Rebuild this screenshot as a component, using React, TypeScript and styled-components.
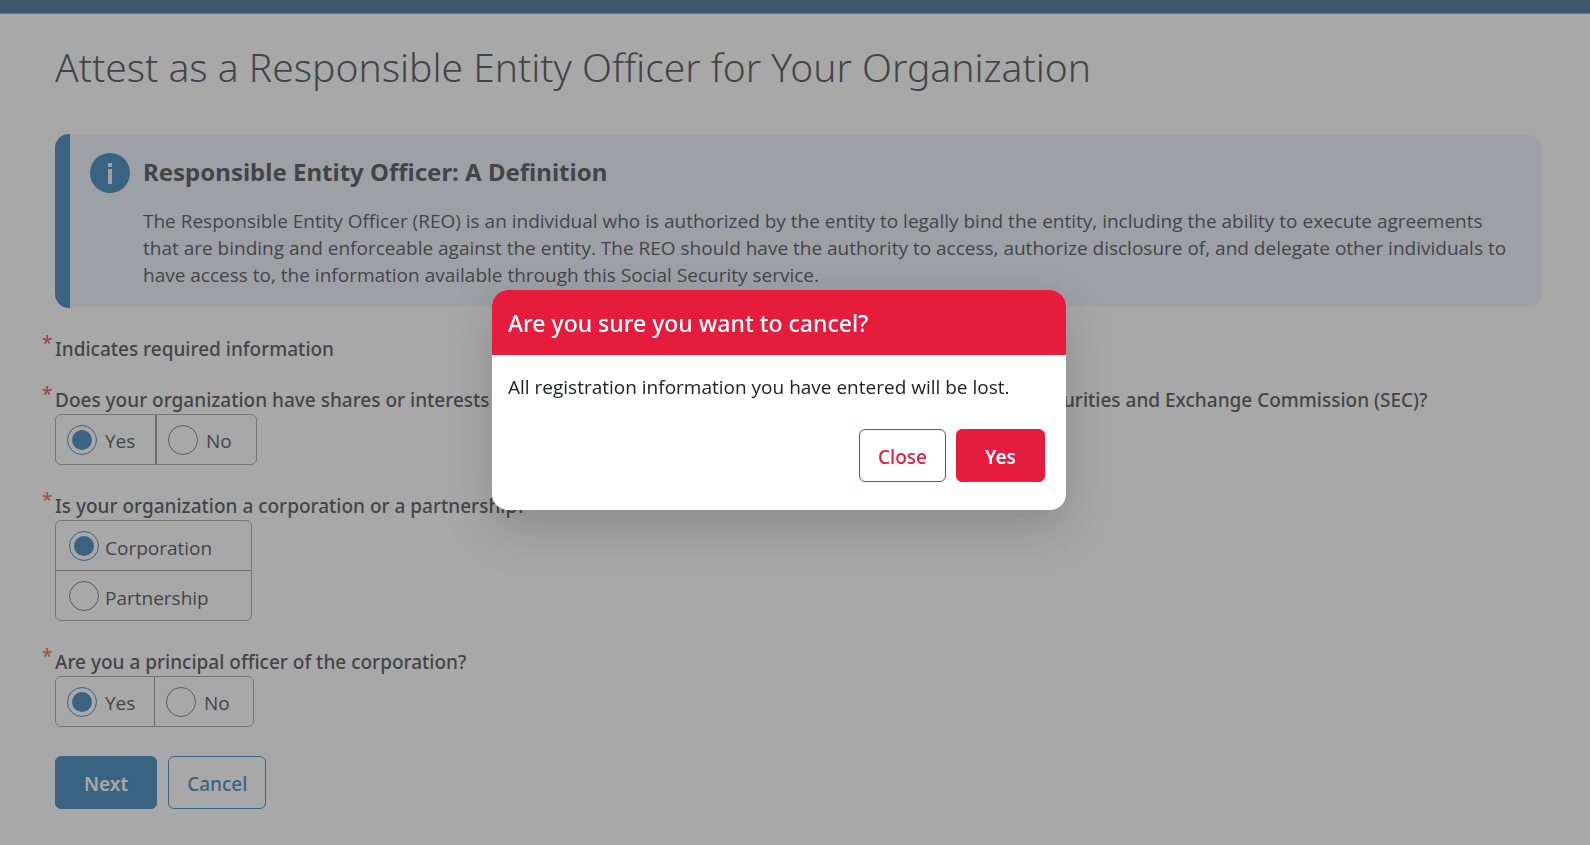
import React from "react";
import styled, { createGlobalStyle } from "styled-components";

const BODY_FONT = '"Segoe UI", "Open Sans", "Noto Sans", sans-serif';
const LABEL_FONT = '"Segoe UI", "Noto Sans", "Open Sans", sans-serif';

const BLUE = "#0b67a8";
const RED = "#e51c3c";
const ORANGE = "#ea4a12";

const GlobalStyle = createGlobalStyle`
  *, *::before, *::after { box-sizing: border-box; }
  body {
    margin: 0;
    background: #fff;
    color: #212328;
    font-family: ${BODY_FONT};
    font-size: 19px;
    line-height: 27px;
  }
  h1, h2, p, fieldset, legend { margin: 0; padding: 0; }
  button, input { font: inherit; margin: 0; }
`;

const TopBar = styled.header`
  height: 14px;
  background: #1a4f7c;
  border-bottom: 1px solid #6f90b0;
`;

const Main = styled.main`
  padding: 24px 48px 36px 55px;
`;

const PageTitle = styled.h1`
  font-family: ${LABEL_FONT};
  font-size: 39px;
  line-height: 58px;
  font-weight: 300;
`;

const Notice = styled.section`
  display: flex;
  margin-top: 38px;
`;

const NoticeAccent = styled.div`
  flex: none;
  width: 15px;
  background: ${BLUE};
  border-radius: 14px 0 0 14px;
`;

const NoticePanel = styled.div`
  flex: 1;
  display: flex;
  gap: 13px;
  margin: 1px 0;
  padding: 18px 24px 18px 20px;
  background: #e7f0fb;
  border-radius: 0 14px 14px 0;
`;

const InfoIcon = styled.svg`
  flex: none;
  width: 40px;
  height: 40px;
`;

const NoticeTitle = styled.h2`
  font-family: ${LABEL_FONT};
  font-size: 24px;
  line-height: 38px;
  font-weight: 700;
  margin-bottom: 17px;
`;

const Field = styled.fieldset<{ $gap: number }>`
  border: 0;
  min-width: 0;
  margin-top: ${(p) => p.$gap}px;
`;

const RequiredLabel = styled.span`
  display: flex;
  margin-left: -13px;
  font-family: ${LABEL_FONT};
  font-weight: 500;
`;

const Star = styled.span<{ $tone: string }>`
  flex: none;
  width: 13px;
  height: 27px;
  line-height: 14px;
  color: ${(p) => p.$tone};
`;

const RequiredNote = styled.p`
  margin-top: 28px;
`;

const OptionGroup = styled.div<{ $stacked?: boolean }>`
  display: inline-flex;
  flex-direction: ${(p) => (p.$stacked ? "column" : "row")};
  vertical-align: top;
  border: 1px solid #8f8f8f;
  border-radius: 6px;
`;

const Option = styled.label<{ $stacked?: boolean; $divider: number; $width: number }>`
  display: flex;
  align-items: center;
  box-sizing: content-box;
  gap: ${(p) => (p.$stacked ? 6 : 8)}px;
  width: ${(p) => p.$width}px;
  height: 49px;

  & > input {
    margin-left: ${(p) => (p.$stacked ? 13 : 11)}px;
  }

  & > span {
    padding-top: ${(p) => (p.$stacked ? 5 : 3)}px;
  }

  & + label {
    border-style: solid;
    border-color: #7a7a7a;
    border-width: ${(p) => (p.$stacked ? "1px 0 0 0" : `0 0 0 ${p.$divider}px`)};
  }
`;

const Radio = styled.input`
  appearance: none;
  flex: none;
  width: 30px;
  height: 30px;
  border: 1px solid #555;
  border-radius: 50%;
  display: grid;
  place-items: center;

  &:checked { border-color: ${BLUE}; }
  &:checked::before {
    content: "";
    width: 20px;
    height: 20px;
    border-radius: 50%;
    background: ${BLUE};
  }
`;

const Actions = styled.div`
  display: flex;
  gap: 11px;
  margin-top: 29px;
`;

const Button = styled.button<{ $solid?: boolean; $tone: string }>`
  height: 53px;
  padding: 4px ${(p) => (p.$solid ? 28 : 18)}px 0;
  border: 1px solid ${(p) => p.$tone};
  border-radius: 6px;
  background: ${(p) => (p.$solid ? p.$tone : "#fff")};
  color: ${(p) => (p.$solid ? "#fff" : p.$tone)};
  font-family: ${LABEL_FONT};
  font-weight: ${(p) => (p.$solid ? 600 : 500)};
`;

const Backdrop = styled.div`
  position: fixed;
  inset: 0;
  display: flex;
  align-items: center;
  justify-content: center;
  padding: 0 32px 45px 0;
  background: rgba(96, 96, 96, 0.55);
`;

const Dialog = styled.div`
  width: 574px;
  border-radius: 16px;
  overflow: hidden;
  background: #fff;
  box-shadow: 0 18px 48px rgba(0, 0, 0, 0.18);
`;

const DialogTitle = styled.h2`
  padding: 15px 16px 14px;
  background: ${RED};
  color: #fff;
  font-family: ${LABEL_FONT};
  font-size: 23px;
  line-height: 36px;
  font-weight: 500;
`;

const DialogBody = styled.div`
  padding: 19px 16px 0;
`;

const DialogActions = styled.div`
  display: flex;
  justify-content: flex-end;
  gap: 10px;
  padding: 28px 21px;
`;

type QuestionProps = {
  name: string;
  text: string;
  options: string[];
  tone: string;
  gap: number;
  width: number;
  stacked?: boolean;
  divider?: number;
};

function Question({ name, text, options, tone, gap, width, stacked, divider = 1 }: QuestionProps) {
  return (
    <Field $gap={gap}>
      <legend>
        <RequiredLabel>
          <Star $tone={tone}>*</Star>
          {text}
        </RequiredLabel>
      </legend>
      <OptionGroup $stacked={stacked}>
        {options.map((option, i) => (
          <Option key={option} $stacked={stacked} $divider={divider} $width={width}>
            <Radio type="radio" name={name} defaultChecked={i === 0} />
            <span>{option}</span>
          </Option>
        ))}
      </OptionGroup>
    </Field>
  );
}

export default function App() {
  return (
    <>
      <GlobalStyle />
      <TopBar />
      <Main>
        <PageTitle>Attest as a Responsible Entity Officer for Your Organization</PageTitle>
        <Notice>
          <NoticeAccent />
          <NoticePanel>
            <InfoIcon viewBox="0 0 40 40" aria-hidden="true">
              <circle cx="20" cy="20" r="20" fill={BLUE} />
              <rect x="18" y="10" width="4" height="4" fill="#e7f0fb" />
              <rect x="18" y="16" width="4" height="15" fill="#e7f0fb" />
            </InfoIcon>
            <div>
              <NoticeTitle>Responsible Entity Officer: A Definition</NoticeTitle>
              <p>
                The Responsible Entity Officer (REO) is an individual who is authorized by the entity to
                legally bind the entity, including the ability to execute agreements that are binding and
                enforceable against the entity. The REO should have the authority to access, authorize
                disclosure of, and delegate other individuals to have access to, the information
                available through this Social Security service.
              </p>
            </div>
          </NoticePanel>
        </Notice>
        <RequiredNote>
          <RequiredLabel>
            <Star $tone={RED}>*</Star>
            Indicates required information
          </RequiredLabel>
        </RequiredNote>
        <form>
          <Question
            name="shares"
            text="Does your organization have shares or interests that are publicly traded or must be registered with the U.S. Securities and Exchange Commission (SEC)?"
            options={["Yes", "No"]}
            tone={RED}
            gap={24}
            width={99}
            divider={2}
          />
          <Question
            name="kind"
            text="Is your organization a corporation or a partnership?"
            options={["Corporation", "Partnership"]}
            tone={ORANGE}
            gap={28}
            width={195}
            stacked
          />
          <Question
            name="officer"
            text="Are you a principal officer of the corporation?"
            options={["Yes", "No"]}
            tone={ORANGE}
            gap={28}
            width={98}
          />
          <Actions>
            <Button type="button" $solid $tone={BLUE}>Next</Button>
            <Button type="button" $tone={BLUE}>Cancel</Button>
          </Actions>
        </form>
      </Main>
      <Backdrop>
        <Dialog role="dialog" aria-modal="true" aria-labelledby="cancel-title">
          <DialogTitle id="cancel-title">Are you sure you want to cancel?</DialogTitle>
          <DialogBody>
            <p>All registration information you have entered will be lost.</p>
          </DialogBody>
          <DialogActions>
            <Button type="button" $tone={RED}>Close</Button>
            <Button type="button" $solid $tone={RED}>Yes</Button>
          </DialogActions>
        </Dialog>
      </Backdrop>
    </>
  );
}
